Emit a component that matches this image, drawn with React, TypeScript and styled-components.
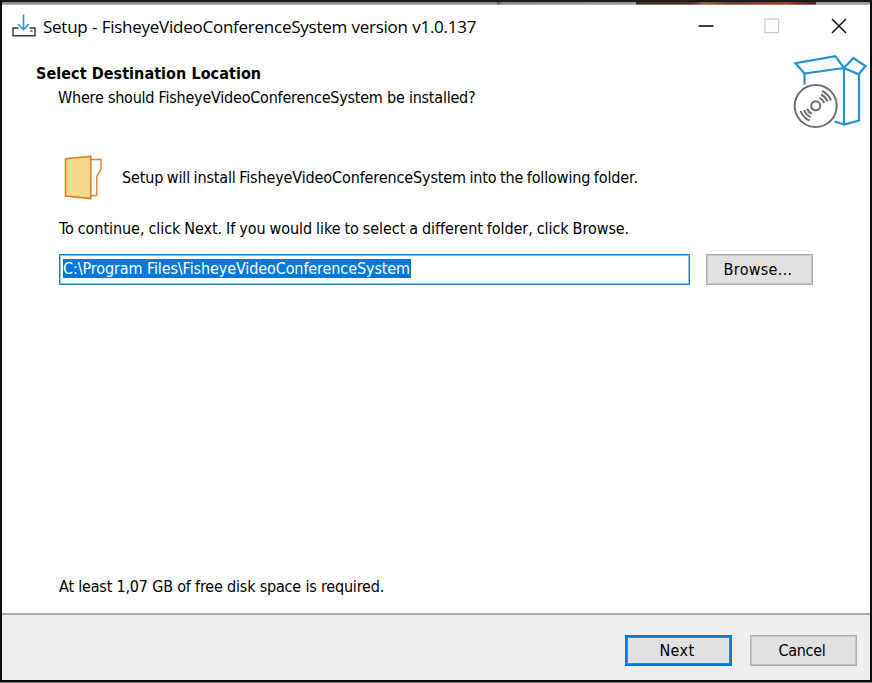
import React from "react";
import styled, { createGlobalStyle } from "styled-components";

const GlobalStyle = createGlobalStyle`
  * { box-sizing: border-box; }
  body { margin: 0; background: #fff; overflow: hidden; }
`;

const Frame = styled.div`
  width: 872px;
  height: 683px;
  display: flex;
  flex-direction: column;
  background: #fff;
  border-left: 2px solid #0c0c0c;
  border-right: 2px solid #0c0c0c;
  font-family: "DejaVu Sans Condensed", "DejaVu Sans", sans-serif;
  font-size: 16px;
  color: #000;
`;

const TopEdge = styled.div`
  flex: none;
  height: 5px;
  margin: 0 -2px;
  border-top: 2px solid #1b1b19;
  border-left: 2px solid #0c0c0c;
  border-right: 2px solid #0c0c0c;
  background:
    linear-gradient(to bottom, transparent 0, transparent 67%, rgba(255, 255, 255, 0.3) 67%),
    linear-gradient(to right, #8f908d 0, #8f908d 495px, #555 495px, #858683 500px, #969793 634px,
      #4c2a22 634px, #59302a 690px, #98602f 703px, #6d3926 730px, #8a3c26 765px, #a33e24 785px,
      #7a2d1e 795px, #55221b 814px, #9a9b97 814px);
`;

const TitleBar = styled.header`
  flex: none;
  height: 43px;
  display: flex;
  align-items: center;
  padding-left: 10px;
`;

const AppIcon = styled.svg`
  flex: none;
  width: 24px;
  height: 26px;
  margin-right: 7px;
  margin-top: -3px;
`;

const Title = styled.h1`
  margin: 0;
  flex: 1;
  font: 400 17px/24px "Open Sans", sans-serif;
  letter-spacing: -0.25px;
  word-spacing: 0.3px;
  white-space: nowrap;
`;

const WindowButton = styled.button`
  width: 66.5px;
  height: 40px;
  padding: 0;
  border: 0;
  background: none;
  display: flex;
  align-items: center;
  justify-content: center;
`;

const Controls = styled.div`
  display: flex;
  margin: -2px -2px 0 0;
`;

const Text = styled.p<{ $spacing?: number; $word?: number }>`
  margin: 0;
  line-height: 20px;
  letter-spacing: ${(p) => p.$spacing ?? 0}px;
  word-spacing: ${(p) => p.$word ?? 0}px;
  white-space: nowrap;
`;

const Heading = styled.h2`
  margin: 0;
  font-size: 16px;
  line-height: 20px;
  font-weight: 700;
  letter-spacing: 0.06px;
  white-space: nowrap;
`;

const Header = styled.section`
  flex: none;
  height: 84px;
  display: flex;
  justify-content: space-between;
  padding: 16px 2px 0 34px;
`;

const HeaderText = styled.div`
  display: flex;
  flex-direction: column;
  gap: 4px;
  ${Text} { margin-left: 22px; }
`;

const BoxArt = styled.svg`
  flex: none;
  width: 76px;
  height: 76px;
  margin-top: -10px;
`;

const Content = styled.main`
  flex: 1;
  display: flex;
  flex-direction: column;
  padding: 22px 57px 16px;
`;

const FolderRow = styled.div`
  height: 48px;
  display: flex;
  align-items: center;
  gap: 19px;
  padding-left: 5px;
  margin-bottom: 17px;
`;

const PathRow = styled.div`
  display: flex;
  gap: 16px;
  margin: 15px 0 auto;
`;

const PathField = styled.div`
  width: 631px;
  height: 31px;
  padding: 4px 3px;
  border: 1px solid #1a7fd6;
  box-shadow: inset 0 0 0 1px #8cc1ec;
  background: #fff;
`;

const Selection = styled.span`
  display: inline-block;
  height: 19px;
  padding: 0 1px 0 0;
  line-height: 20px;
  letter-spacing: -0.1px;
  color: #fff;
  background: #0078d7;
  vertical-align: top;
  white-space: nowrap;
`;

const Button = styled.button<{ $primary?: boolean; $spacing?: number }>`
  flex: none;
  width: 107px;
  height: 31px;
  padding: 1px 3px 0 0;
  border: ${(p) => (p.$primary ? "2px solid #0078d7" : "1px solid #adadad")};
  box-shadow: inset 0 0 0 1px ${(p) => (p.$primary ? "#2c8cdb" : "#c6c6c6")};
  background: #e1e1e1;
  color: #000;
  font: inherit;
  line-height: 20px;
  letter-spacing: ${(p) => p.$spacing ?? 0}px;
`;

const Footer = styled.footer`
  flex: none;
  height: 67px;
  display: flex;
  justify-content: flex-end;
  gap: 18px;
  padding: 20px 13px 0 0;
  border-top: 2px solid #a8a8a8;
  background: #efefef;
`;

const BottomEdge = styled.div`
  flex: none;
  height: 3px;
  margin: 0 -2px;
  background: #0c0c0c;
  border-bottom: 1px solid #777;
`;

export default function App() {
  return (
    <Frame>
      <GlobalStyle />
      <TopEdge />
      <TitleBar>
        <AppIcon viewBox="0 0 24 26" fill="none">
          <path d="M6.5 16H1v7.8h22V16h-5.5" stroke="#3c3c3c" strokeWidth="1.5" />
          <path d="M18 19h2.5" stroke="#3c3c3c" strokeWidth="1.3" />
          <path d="M11.5 2.5v15M6 12l5.5 5.5L17 12" stroke="#3a94d3" strokeWidth="1.6" />
        </AppIcon>
        <Title>Setup - FisheyeVideoConferenceSystem version v1.0.137</Title>
        <Controls>
          <WindowButton aria-label="Minimize">
            <svg width="16" height="16"><path d="M.5 8h15" stroke="#111" strokeWidth="1.6" /></svg>
          </WindowButton>
          <WindowButton aria-label="Maximize">
            <svg width="16" height="16"><rect x="1" y="1" width="13.6" height="13.6" fill="none" stroke="#ccc" strokeWidth="1.3" /></svg>
          </WindowButton>
          <WindowButton aria-label="Close">
            <svg width="16" height="16"><path d="M1 1l14 14M15 1L1 15" stroke="#111" strokeWidth="1.5" /></svg>
          </WindowButton>
        </Controls>
      </TitleBar>
      <Header>
        <HeaderText>
          <Heading>Select Destination Location</Heading>
          <Text $spacing={-0.22}>Where should FisheyeVideoConferenceSystem be installed?</Text>
        </HeaderText>
        <BoxArt viewBox="792 54 76 76" fill="none">
          <g stroke="#2490d5" strokeWidth="2.2">
            <path d="M804.5 84.5V73.5L795.5 63.2 835.3 56.2 844 68 804.5 73.5" />
            <path d="M844 68l9.3-10 12.2 8-6.8 8.3zM844 68v56.5l15-4V74.3M844 124.5l-9.5-3" />
          </g>
          <g stroke="#69716f" strokeWidth="2">
            <circle cx="815.7" cy="106" r="21" />
            <circle cx="815.7" cy="105.8" r="4.5" />
            <path d="M819.5 97.8a9 9 0 0 1 4.8 5M821 94.5a13 13 0 0 1 6.5 7M822 91a17 17 0 0 1 9 9.5M812 113.8a9 9 0 0 1-5-5M810.5 117a13 13 0 0 1-6.5-7M809.5 120.5a17 17 0 0 1-9-9.5" />
          </g>
        </BoxArt>
      </Header>
      <Content>
        <FolderRow>
          <svg width="39" height="46" viewBox="64 155 39 46">
            <path d="M90 159.5h11v9.8l-4.3 7.2v19H90z" fill="#fff" stroke="#e8833b" strokeWidth="1.5" />
            <path d="M65.5 158.8L90.8 156.3v42.3l-25.3-2.6z" fill="#f5d78d" stroke="#e87722" strokeWidth="1.5" />
          </svg>
          <Text $spacing={-0.12} $word={-1}>Setup will install FisheyeVideoConferenceSystem into the following folder.</Text>
        </FolderRow>
        <Text $spacing={-0.06} $word={-0.5}>To continue, click Next. If you would like to select a different folder, click Browse.</Text>
        <PathRow>
          <PathField><Selection>C:\Program Files\FisheyeVideoConferenceSystem</Selection></PathField>
          <Button $spacing={0.3}>Browse...</Button>
        </PathRow>
        <Text $spacing={-0.186}>At least 1,07 GB of free disk space is required.</Text>
      </Content>
      <Footer>
        <Button $primary $spacing={0.4}>Next</Button>
        <Button $spacing={-0.3}>Cancel</Button>
      </Footer>
      <BottomEdge />
    </Frame>
  );
}
